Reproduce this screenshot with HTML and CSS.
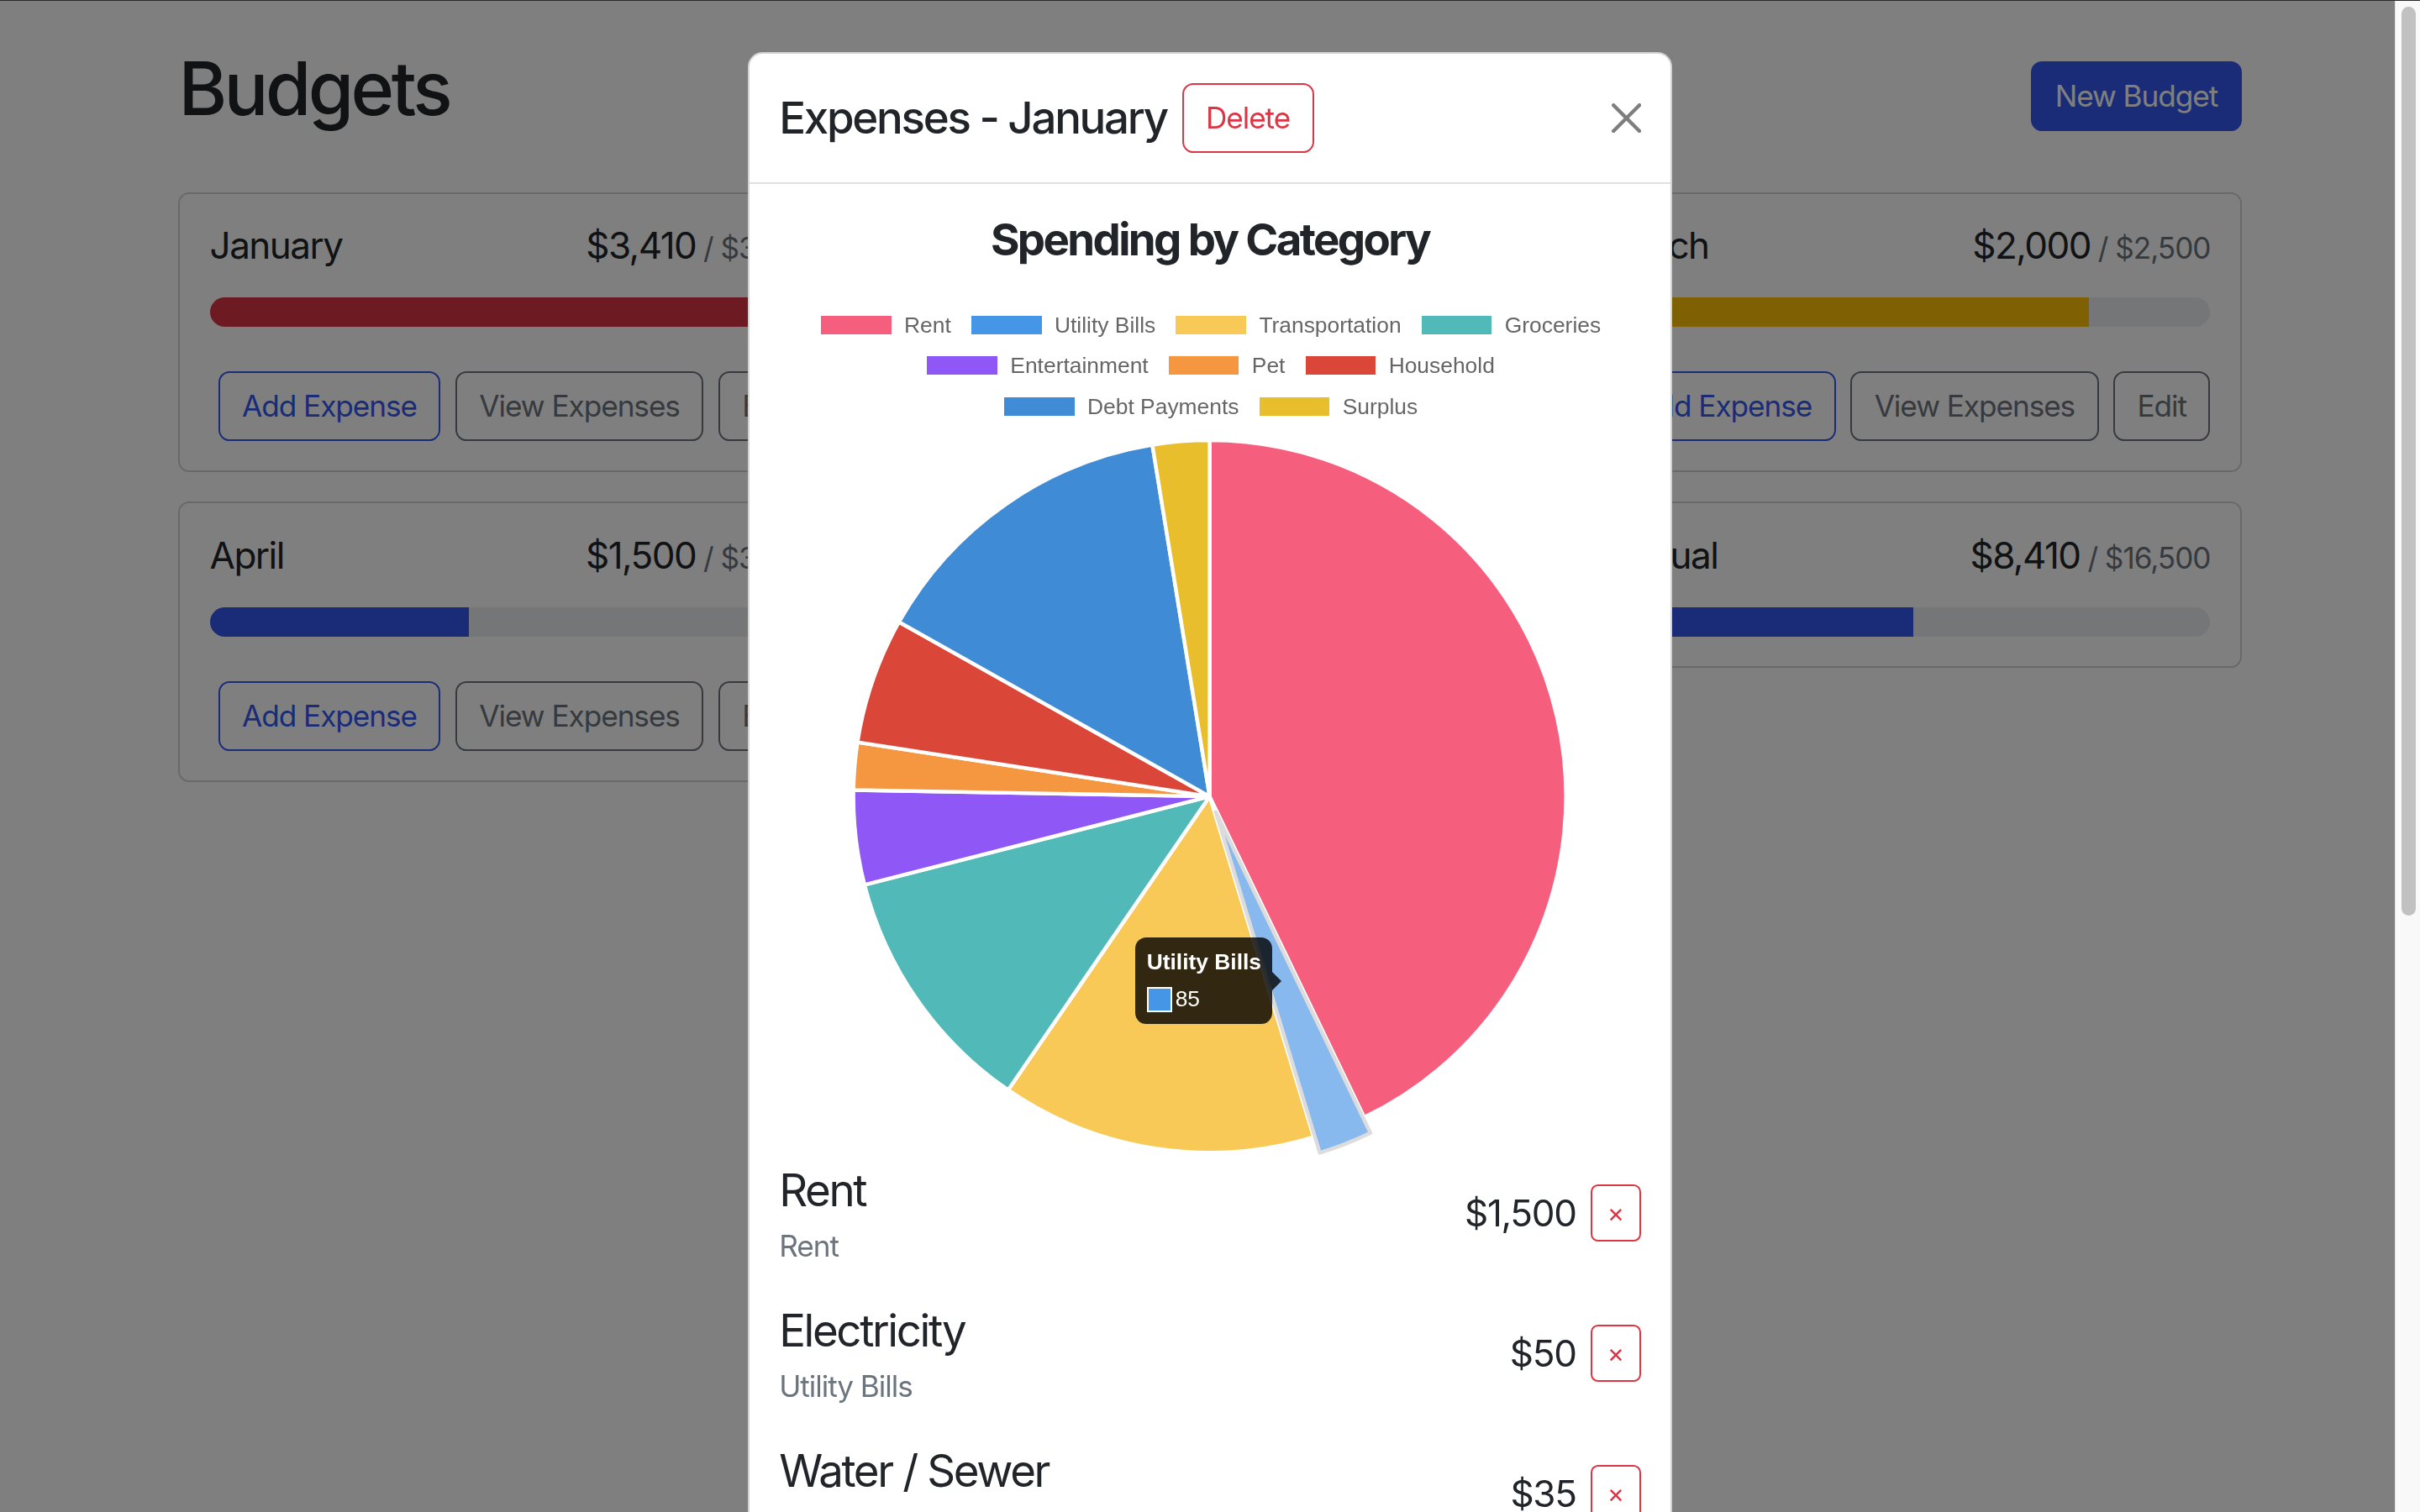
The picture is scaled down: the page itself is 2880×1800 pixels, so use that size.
FILE: index.html
```html
<!DOCTYPE html>
<html lang="en">
<head>
<meta charset="utf-8">
<title>Budgets</title>
<link rel="stylesheet" href="styles.css">
</head>
<body>
<div class="container">
  <div class="page-header">
    <h1 class="page-title">Budgets</h1>
    <button class="btn btn-primary">New Budget</button>
  </div>
  <div class="budget-grid">
    <div class="card">
      <div class="card-body">
        <div class="card-title"><div class="budget-name">January</div><div class="budget-amount">$3,410<span class="budget-max">/ $3,500</span></div></div>
        <div class="progress"><div class="progress-bar bar-danger" style="width:97.4%"></div></div>
        <div class="card-actions"><button class="btn btn-outline-primary">Add Expense</button><button class="btn btn-outline-secondary">View Expenses</button><button class="btn btn-outline-secondary">Edit</button></div>
      </div>
    </div>
    <div class="card">
      <div class="card-body">
        <div class="card-title"><div class="budget-name">February</div><div class="budget-amount">$1,000<span class="budget-max">/ $3,500</span></div></div>
        <div class="progress"><div class="progress-bar bar-primary" style="width:28.6%"></div></div>
        <div class="card-actions"><button class="btn btn-outline-primary">Add Expense</button><button class="btn btn-outline-secondary">View Expenses</button><button class="btn btn-outline-secondary">Edit</button></div>
      </div>
    </div>
    <div class="card">
      <div class="card-body">
        <div class="card-title"><div class="budget-name">March</div><div class="budget-amount">$2,000<span class="budget-max">/ $2,500</span></div></div>
        <div class="progress"><div class="progress-bar bar-warning" style="width:80%"></div></div>
        <div class="card-actions"><button class="btn btn-outline-primary">Add Expense</button><button class="btn btn-outline-secondary">View Expenses</button><button class="btn btn-outline-secondary">Edit</button></div>
      </div>
    </div>
    <div class="card">
      <div class="card-body">
        <div class="card-title"><div class="budget-name">April</div><div class="budget-amount">$1,500<span class="budget-max">/ $3,500</span></div></div>
        <div class="progress"><div class="progress-bar bar-primary" style="width:42.86%"></div></div>
        <div class="card-actions"><button class="btn btn-outline-primary">Add Expense</button><button class="btn btn-outline-secondary">View Expenses</button><button class="btn btn-outline-secondary">Edit</button></div>
      </div>
    </div>
    <div class="card">
      <div class="card-body">
        <div class="card-title"><div class="budget-name">Uncategorized</div><div class="budget-amount">$500</div></div>
        <div class="card-actions"><button class="btn btn-outline-primary">Add Expense</button><button class="btn btn-outline-secondary">View Expenses</button></div>
      </div>
    </div>
    <div class="card">
      <div class="card-body">
        <div class="card-title"><div class="budget-name">Annual</div><div class="budget-amount">$8,410<span class="budget-max">/ $16,500</span></div></div>
        <div class="progress"><div class="progress-bar bar-primary" style="width:50.97%"></div></div>
      </div>
    </div>
  </div>
</div>

<div class="modal-backdrop"></div>

<div class="modal">
  <div class="modal-dialog">
    <div class="modal-content">
      <div class="modal-header">
        <div class="modal-title">
          <span>Expenses - January</span>
          <button class="btn btn-outline-danger">Delete</button>
        </div>
        <button class="btn-close" aria-label="Close">
          <svg viewBox="0 0 16 16" width="35.2" height="35.2"><path d="M1 1L15 15M15 1L1 15" stroke="#000" stroke-width="2" stroke-linecap="round" fill="none"/></svg>
        </button>
      </div>
      <div class="modal-body">
        <h4 class="chart-title">Spending by Category</h4>
        <div class="chart">
          <div class="legend">
            <div class="legend-row">
              <span class="legend-item"><span class="legend-box c-rent"></span>Rent</span>
              <span class="legend-item"><span class="legend-box c-utility"></span>Utility Bills</span>
              <span class="legend-item"><span class="legend-box c-transport"></span>Transportation</span>
              <span class="legend-item"><span class="legend-box c-groceries"></span>Groceries</span>
            </div>
            <div class="legend-row">
              <span class="legend-item"><span class="legend-box c-entertainment"></span>Entertainment</span>
              <span class="legend-item"><span class="legend-box c-pet"></span>Pet</span>
              <span class="legend-item"><span class="legend-box c-household"></span>Household</span>
            </div>
            <div class="legend-row">
              <span class="legend-item"><span class="legend-box c-debt"></span>Debt Payments</span>
              <span class="legend-item"><span class="legend-box c-surplus"></span>Surplus</span>
            </div>
          </div>
          <svg class="pie" viewBox="927.4 497.9 1025.2 880.7" width="1025.2" height="880.7">
            <g stroke="#fff" stroke-width="4.4" stroke-linejoin="round">
              <path fill="#f55e7c" d="M1440 949L1440 525A424 424 0 0 1 1624 1331Z"/>
              <path fill="#f8c957" d="M1440 949L1563.8 1354.6A424 424 0 0 1 1200.1 1298.6Z"/>
              <path fill="#52b9b9" d="M1440 949L1200.1 1298.6A424 424 0 0 1 1029.3 1054.4Z"/>
              <path fill="#8e57f6" d="M1440 949L1029.3 1054.4A424 424 0 0 1 1016.1 941.4Z"/>
              <path fill="#f59641" d="M1440 949L1016.1 941.4A424 424 0 0 1 1020.9 884.6Z"/>
              <path fill="#da4739" d="M1440 949L1020.9 884.6A424 424 0 0 1 1070.3 741.4Z"/>
              <path fill="#3f8bd6" d="M1440 949L1070.3 741.4A424 424 0 0 1 1371.8 530.5Z"/>
              <path fill="#e8be2c" d="M1440 949L1371.8 530.5A424 424 0 0 1 1440 525Z"/>
            </g>
            <path fill="#87b9ee" stroke="#dcdcdc" stroke-width="4.4" stroke-linejoin="round" d="M1447.3 967.6L1631.3 1349.6A424 424 0 0 1 1571.1 1373.2Z"/>
          </svg>
          <div class="chart-tooltip">
            <div class="tooltip-title">Utility Bills</div>
            <div class="tooltip-body"><span class="tooltip-swatch"></span>85</div>
          </div>
        </div>
        <div class="expense-list">
          <div class="expense-row">
            <div class="expense-info"><div class="expense-desc">Rent</div><div class="expense-cat">Rent</div></div>
            <div class="expense-amount">$1,500</div>
            <button class="btn btn-outline-danger btn-sm">&times;</button>
          </div>
          <div class="expense-row">
            <div class="expense-info"><div class="expense-desc">Electricity</div><div class="expense-cat">Utility Bills</div></div>
            <div class="expense-amount">$50</div>
            <button class="btn btn-outline-danger btn-sm">&times;</button>
          </div>
          <div class="expense-row">
            <div class="expense-info"><div class="expense-desc">Water / Sewer</div><div class="expense-cat">Utility Bills</div></div>
            <div class="expense-amount">$35</div>
            <button class="btn btn-outline-danger btn-sm">&times;</button>
          </div>
          <div class="expense-row">
            <div class="expense-info"><div class="expense-desc">Gas</div><div class="expense-cat">Transportation</div></div>
            <div class="expense-amount">$500</div>
            <button class="btn btn-outline-danger btn-sm">&times;</button>
          </div>
        </div>
      </div>
    </div>
  </div>
</div>

<div class="scrollbar"><div class="scrollbar-thumb"></div></div>
<div class="window-edge"></div>
</body>
</html>
```

FILE: styles.css
```css
* { box-sizing: border-box; }

html, body {
  margin: 0;
  height: 100%;
  overflow: hidden;
}

body {
  font-family: Inter, "Liberation Sans", sans-serif;
  font-size: 35.2px;
  line-height: 1.5;
  letter-spacing: -0.03em;
  color: #212529;
  background: #fff;
}

.container {
  width: 2508px;
  margin: 52.8px auto 0;
  padding: 0 26.4px;
}

.page-header {
  display: flex;
  align-items: center;
  gap: 17.6px;
  margin-bottom: 52.8px;
}

.page-title {
  margin: 0 auto 17.6px 0;
  font-size: 88px;
  font-weight: 500;
  line-height: 1.2;
  letter-spacing: -0.041em;
}

.btn {
  display: inline-block;
  font-family: inherit;
  font-size: 35.2px;
  font-weight: 400;
  line-height: 1.5;
  letter-spacing: -0.03em;
  padding: 13.2px 26.4px;
  border: 2.2px solid transparent;
  border-radius: 13.2px;
  background: transparent;
  white-space: nowrap;
  cursor: pointer;
}

.btn-primary { background: #3459f0; border-color: #3459f0; color: #fff; }
.btn-outline-primary { color: #3459f0; border-color: #3459f0; }
.btn-outline-secondary { color: #6c757d; border-color: #6c757d; }
.btn-outline-danger { color: #dc3545; border-color: #dc3545; }

.btn-sm {
  font-size: 30.8px;
  padding: 8.8px 17.6px;
  border-radius: 8.8px;
  letter-spacing: 0;
}

.budget-grid {
  display: grid;
  grid-template-columns: repeat(3, minmax(0, 1fr));
  gap: 35.2px;
  align-items: start;
}

.card {
  min-width: 0;
  border: 2.2px solid rgba(0, 0, 0, 0.175);
  border-radius: 13.2px;
  background: #fff;
}

.card-body { padding: 35.2px; }

.card-title {
  display: flex;
  justify-content: space-between;
  align-items: baseline;
  font-size: 44px;
  line-height: 1.2;
  letter-spacing: -0.035em;
  margin-bottom: 35.2px;
}

.budget-amount { display: flex; align-items: baseline; }

.budget-max {
  font-size: 35.2px;
  color: #6c757d;
  margin-left: 8.8px;
  letter-spacing: -0.03em;
}

.progress {
  display: flex;
  height: 35.2px;
  background: #e9ecef;
  border-radius: 999px;
  overflow: hidden;
}

.progress-bar { height: 100%; }
.bar-danger { background: #dc3545; }
.bar-warning { background: #ffc107; }
.bar-primary { background: #3459f0; }

.card-actions {
  display: flex;
  justify-content: flex-end;
  gap: 17.6px;
  margin-top: 52.8px;
}

/* modal */
.modal-backdrop {
  position: fixed;
  inset: 0;
  background: rgba(0, 0, 0, 0.5);
}

.modal {
  position: fixed;
  inset: 0;
  overflow: hidden;
}

.modal-dialog {
  width: 1100px;
  margin: 61.6px auto;
}

.modal-content {
  background: #fff;
  border: 2.2px solid rgba(0, 0, 0, 0.175);
  border-radius: 17.6px;
}

.modal-header {
  display: flex;
  align-items: center;
  padding: 35.2px;
  border-bottom: 2.2px solid #dee2e6;
}

.modal-title {
  display: flex;
  align-items: center;
  gap: 17.6px;
  font-size: 52.8px;
  font-weight: 500;
  line-height: 1.5;
  letter-spacing: -0.043em;
}

.btn-close {
  margin-left: auto;
  width: 35.2px;
  height: 35.2px;
  padding: 0;
  border: 0;
  background: none;
  opacity: 0.5;
  display: flex;
}

.modal-body { padding: 35.2px; }

.chart-title {
  margin: 0 0 17.6px;
  font-size: 52.8px;
  font-weight: 700;
  line-height: 1.2;
  text-align: center;
  letter-spacing: -0.05em;
}

.chart {
  position: relative;
  height: 1042.4px;
}

.legend {
  padding-top: 38.6px;
  display: flex;
  flex-direction: column;
  gap: 22px;
  font-family: "Liberation Sans", Arial, sans-serif;
  font-size: 26.4px;
  line-height: 26.4px;
  letter-spacing: 0;
  color: #666;
}

.legend-row {
  display: flex;
  justify-content: center;
  gap: 22px;
  height: 26.4px;
}

.legend-item {
  display: flex;
  align-items: center;
  white-space: nowrap;
}

.legend-box {
  width: 83.6px;
  height: 22px;
  margin: 2.2px 15.4px 2.2px 2.2px;
}

.c-rent { background: #f55e7c; }
.c-utility { background: #4596e6; }
.c-transport { background: #f8c957; }
.c-groceries { background: #52b9b9; }
.c-entertainment { background: #8e57f6; }
.c-pet { background: #f59641; }
.c-household { background: #da4739; }
.c-debt { background: #3f8bd6; }
.c-surplus { background: #e8be2c; }

.pie { display: block; }

.chart-tooltip {
  position: absolute;
  left: 424.3px;
  top: 781.1px;
  padding: 13.2px;
  background: rgba(0, 0, 0, 0.8);
  border-radius: 13.2px;
  color: #fff;
  font-family: "Liberation Sans", Arial, sans-serif;
  font-size: 26.4px;
  line-height: 31.7px;
  letter-spacing: 0;
  white-space: nowrap;
}

.chart-tooltip::after {
  content: "";
  position: absolute;
  right: -11px;
  top: 50%;
  margin-top: -11px;
  border-style: solid;
  border-width: 11px 0 11px 11px;
  border-color: transparent transparent transparent rgba(0, 0, 0, 0.8);
}

.tooltip-title {
  font-weight: 700;
  margin-bottom: 13.2px;
}

.tooltip-body {
  display: flex;
  align-items: center;
}

.tooltip-swatch {
  width: 30.4px;
  height: 30.4px;
  border: 2.6px solid #fff;
  background: #4596e6;
  margin-right: 3.6px;
}

.expense-list {
  display: flex;
  flex-direction: column;
  gap: 35.2px;
}

.expense-row {
  display: flex;
  align-items: center;
  gap: 17.6px;
}

.expense-info { margin-right: auto; }

.expense-desc {
  font-size: 52.8px;
  line-height: 1.5;
  letter-spacing: -0.045em;
}

.expense-cat {
  color: #6c757d;
}

.expense-amount {
  font-size: 44px;
  line-height: 1.5;
  letter-spacing: -0.03em;
}

/* overlay scrollbar */
.scrollbar {
  position: fixed;
  top: 0;
  right: 0;
  width: 30px;
  height: 100%;
  background: #f9f9f9;
  border-left: 1px solid #e4e4e4;
}

.scrollbar-thumb {
  position: absolute;
  left: 7px;
  top: 8px;
  width: 17px;
  height: 1082px;
  border-radius: 9px;
  background: #c1c1c1;
}

.window-edge {
  position: fixed;
  top: 0;
  left: 0;
  right: 0;
  height: 1px;
  background: #2a2a2a;
}
```
